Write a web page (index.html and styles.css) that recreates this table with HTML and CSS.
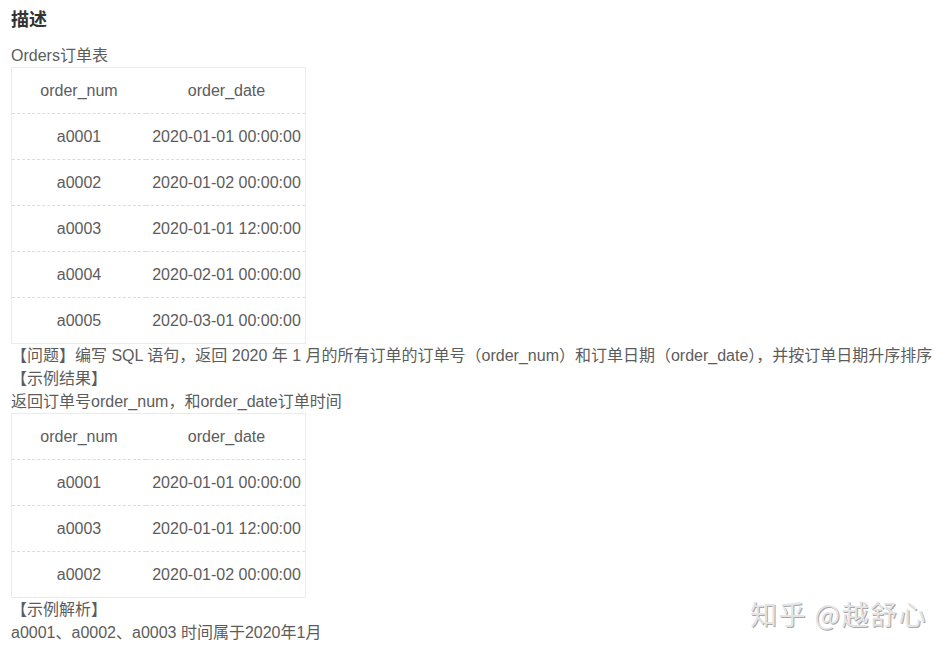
FILE: index.html
```html
<!DOCTYPE html>
<html lang="zh-CN">
<head>
    <meta charset="UTF-8">
    <title>描述</title>
    <link rel="stylesheet" href="styles.css">
</head>
<body>
    <div class="desc">
        <h3>描述</h3>
        <p>Orders订单表</p>
        <table class="data">
            <tr><td class="c1">order_num</td><td class="c2">order_date</td></tr>
            <tr><td class="c1">a0001</td><td class="c2">2020-01-01 00:00:00</td></tr>
            <tr><td class="c1">a0002</td><td class="c2">2020-01-02 00:00:00</td></tr>
            <tr><td class="c1">a0003</td><td class="c2">2020-01-01 12:00:00</td></tr>
            <tr><td class="c1">a0004</td><td class="c2">2020-02-01 00:00:00</td></tr>
            <tr><td class="c1">a0005</td><td class="c2">2020-03-01 00:00:00</td></tr>
        </table>
        <p>【问题】编写 SQL 语句，返回 2020 年 1 月的所有订单的订单号（order_num）和订单日期（order_date），并按订单日期升序排序</p>
        <p>【示例结果】</p>
        <p>返回订单号order_num，和order_date订单时间</p>
        <table class="data">
            <tr><td class="c1">order_num</td><td class="c2">order_date</td></tr>
            <tr><td class="c1">a0001</td><td class="c2">2020-01-01 00:00:00</td></tr>
            <tr><td class="c1">a0003</td><td class="c2">2020-01-01 12:00:00</td></tr>
            <tr><td class="c1">a0002</td><td class="c2">2020-01-02 00:00:00</td></tr>
        </table>
        <p>【示例解析】</p>
        <p>a0001、a0002、a0003 时间属于2020年1月</p>
    </div>
    <div class="watermark">知乎 @越舒心</div>
</body>
</html>
```

FILE: styles.css
```css
body {
    margin: 0;
    padding: 8px 11px 0;
    background: #fff;
    color: #5c5c5c;
    font-family: "Liberation Sans", Arial, "Noto Sans CJK SC", sans-serif;
    font-size: 16px;
    position: relative;
    height: 645px;
    overflow: hidden;
}

.desc h3 {
    margin: 0 0 12px;
    font-size: 18px;
    line-height: 24px;
    font-weight: bold;
    color: #333;
}

.desc p {
    margin: 0;
    line-height: 23px;
    white-space: nowrap;
}

.data {
    border-collapse: collapse;
    border: 1px solid #ececec;
}

.data td {
    height: 45px;
    padding: 0;
    text-align: center;
    border-top: 1px dashed #dcdcdc;
}

.data tr:first-child td {
    border-top: none;
}

.data .c1 {
    width: 134px;
}

.data .c2 {
    width: 157px;
    padding-left: 2px;
}

.watermark {
    position: absolute;
    left: 750px;
    top: 596px;
    font-family: "Noto Sans CJK SC", sans-serif;
    font-size: 27px;
    line-height: 36px;
    color: #e4e4e4;
    text-shadow: 1px 1px 0 #a8a8a8;
    letter-spacing: 1.5px;
}
```
